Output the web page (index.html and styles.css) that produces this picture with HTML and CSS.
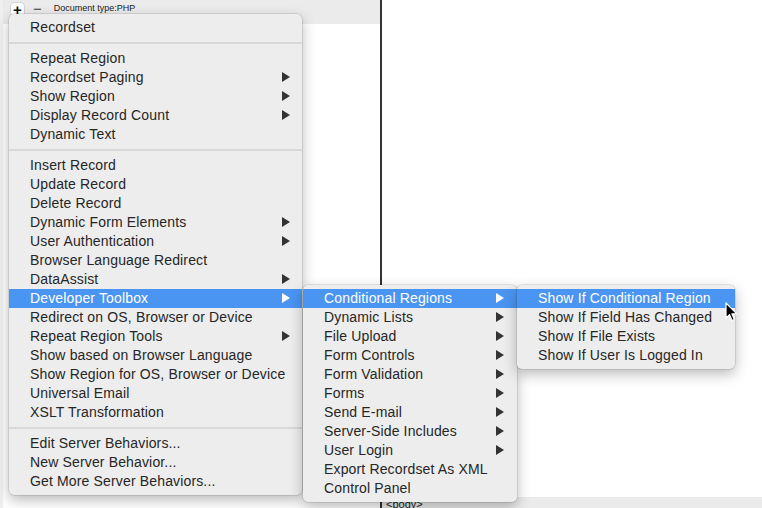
FILE: index.html
```html
<!DOCTYPE html>
<html lang="en">
<head>
    <meta charset="UTF-8">
    <title>Server Behaviors</title>
    <link rel="stylesheet" href="styles.css">
</head>
<body>
    <div class="app">
        <div class="left-panel">
            <div class="toolbar">
                <span class="tb-btn plus">+</span>
                <span class="tb-btn minus">&minus;</span>
                <span class="doctype">Document type:PHP</span>
            </div>
            <div class="panel-body"></div>
        </div>
        <div class="divider"></div>
        <div class="right-panel">
            <div class="canvas"></div>
            <div class="statusbar"><span class="tag">&lt;body&gt;</span></div>
        </div>
    </div>

    <ul class="menu main-menu">
        <li class="item">Recordset</li>
        <li class="sep"></li>
        <li class="item">Repeat Region</li>
        <li class="item sub">Recordset Paging</li>
        <li class="item sub">Show Region</li>
        <li class="item sub">Display Record Count</li>
        <li class="item">Dynamic Text</li>
        <li class="sep"></li>
        <li class="item">Insert Record</li>
        <li class="item">Update Record</li>
        <li class="item">Delete Record</li>
        <li class="item sub">Dynamic Form Elements</li>
        <li class="item sub">User Authentication</li>
        <li class="item">Browser Language Redirect</li>
        <li class="item sub">DataAssist</li>
        <li class="item sub active">Developer Toolbox
            <ul class="menu submenu toolbox-menu">
                <li class="item sub active">Conditional Regions
                    <ul class="menu submenu regions-menu">
                        <li class="item active">Show If Conditional Region</li>
                        <li class="item">Show If Field Has Changed</li>
                        <li class="item">Show If File Exists</li>
                        <li class="item">Show If User Is Logged In</li>
                    </ul>
                </li>
                <li class="item sub">Dynamic Lists</li>
                <li class="item sub">File Upload</li>
                <li class="item sub">Form Controls</li>
                <li class="item sub">Form Validation</li>
                <li class="item sub">Forms</li>
                <li class="item sub">Send E-mail</li>
                <li class="item sub">Server-Side Includes</li>
                <li class="item sub">User Login</li>
                <li class="item">Export Recordset As XML</li>
                <li class="item">Control Panel</li>
            </ul>
        </li>
        <li class="item">Redirect on OS, Browser or Device</li>
        <li class="item sub">Repeat Region Tools</li>
        <li class="item">Show based on Browser Language</li>
        <li class="item">Show Region for OS, Browser or Device</li>
        <li class="item">Universal Email</li>
        <li class="item">XSLT Transformation</li>
        <li class="sep"></li>
        <li class="item">Edit Server Behaviors...</li>
        <li class="item">New Server Behavior...</li>
        <li class="item">Get More Server Behaviors...</li>
    </ul>

    <svg class="cursor" width="13" height="20" viewBox="0 0 13 20">
        <path d="M1 1 L1 16 L4.5 12.6 L7 18.5 L9.3 17.5 L6.9 11.8 L11.8 11.8 Z" fill="#000" stroke="#fff" stroke-width="1.2" stroke-linejoin="round"/>
    </svg>
</body>
</html>
```

FILE: styles.css
```css
body {
    margin: 0;
    padding: 0;
    font-family: 'Liberation Sans', Arial, sans-serif;
    background: #fff;
    width: 762px;
    height: 508px;
    overflow: hidden;
    position: relative;
}

.app {
    display: flex;
    height: 508px;
}

.left-panel {
    width: 380px;
    display: flex;
    flex-direction: column;
    border-left: 3px solid #f0f0f0;
    box-sizing: border-box;
}

.toolbar {
    height: 24px;
    background: #ebebeb;
    display: flex;
    align-items: flex-start;
    padding-left: 8px;
    box-sizing: border-box;
}

.tb-btn {
    font-size: 15px;
    line-height: 12px;
    color: #111;
    font-weight: bold;
}

.plus {
    background: #fff;
    border-radius: 3px;
    width: 13px;
    height: 13px;
    margin-top: 3px;
    text-align: center;
    line-height: 14px;
    box-shadow: 0 0 0 0.5px rgba(0, 0, 0, 0.2);
}

.minus {
    margin: 3px 0 0 9px;
    font-weight: normal;
    color: #444;
}

.doctype {
    font-size: 9px;
    color: #222;
    margin: 3px 0 0 12px;
}

.panel-body {
    flex: 1;
    background: #fff;
}

.divider {
    width: 2px;
    background: #333;
}

.right-panel {
    flex: 1;
    display: flex;
    flex-direction: column;
}

.canvas {
    flex: 1;
    background: #fff;
}

.statusbar {
    height: 11px;
    background: #ebebeb;
    overflow: hidden;
    padding-left: 4px;
}

.tag {
    display: block;
    font-size: 11px;
    line-height: 11px;
    margin-top: 2px;
    color: #222;
}

/* menus */
.menu {
    list-style: none;
    margin: 0;
    padding: 4px 0;
    background: #ededed;
    border-radius: 5px;
    box-shadow: 0 0 0 0.5px rgba(0, 0, 0, 0.18), 0 5px 14px rgba(0, 0, 0, 0.28);
    font-size: 14px;
    letter-spacing: 0.15px;
    color: #262626;
    position: absolute;
}

.main-menu {
    left: 9px;
    top: 14px;
    width: 293px;
}

.item {
    height: 19px;
    line-height: 19px;
    padding-left: 21px;
    position: relative;
    white-space: nowrap;
}

.item.sub::after {
    content: '';
    position: absolute;
    right: 12px;
    top: 4px;
    border-left: 8px solid #333;
    border-top: 5px solid transparent;
    border-bottom: 5px solid transparent;
}

.item.active {
    background: #4a95f2;
    color: #fff;
}

.item.active.sub::after {
    border-left-color: #fff;
}

.sep {
    height: 12px;
    position: relative;
}

.sep::before {
    content: '';
    position: absolute;
    left: 0;
    right: 0;
    top: 5px;
    height: 2px;
    background: #d8d8d8;
}

.submenu {
    top: -4px;
    color: #262626;
    z-index: 2;
}

.toolbox-menu {
    left: 100%;
    margin-left: 1px;
    width: 214px;
}

.toolbox-menu .item.sub::after {
    right: 13px;
}

.regions-menu {
    left: 100%;
    width: 218px;
}

.cursor {
    position: absolute;
    left: 725px;
    top: 302px;
    z-index: 5;
}
```
